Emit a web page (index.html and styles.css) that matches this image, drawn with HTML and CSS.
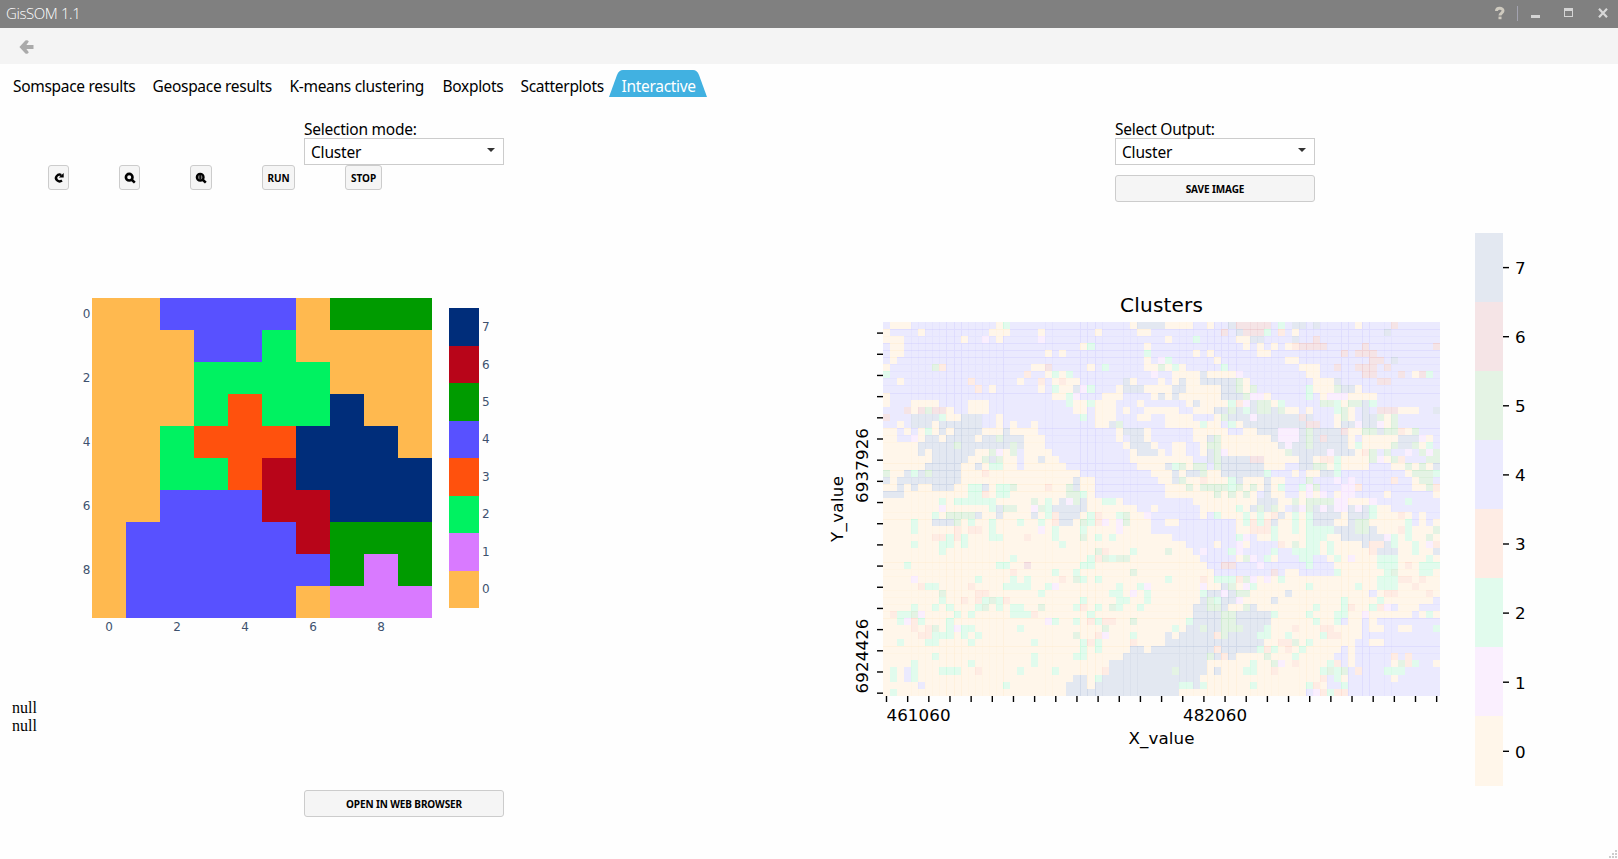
FILE: index.html
```html
<!DOCTYPE html>
<html lang="en">
<head>
<meta charset="utf-8">
<title>GisSOM 1.1</title>
<link rel="stylesheet" href="styles.css">
</head>
<body>
<header class="titlebar">
  <span class="app-name">GisSOM 1.1</span>
  <svg class="window-controls" width="124" height="28" viewBox="1494 0 124 28">
    <path d="M1496.500 11 C1496.500 7.400 1503 7.400 1503 10.800 C1503 13.200 1500 13 1500 15.600" fill="none" stroke="#cfcabf" stroke-width="3"/>
    <rect x="1498.500" y="16.600" width="3" height="2.600" fill="#cfcabf"/>
    <rect x="1517" y="6" width="1" height="15" fill="#a3a3b0"/>
    <rect x="1531" y="15" width="9" height="3" fill="#d4d4d4"/>
    <path d="M1564 8h9v9h-9z M1565 11v5h7v-5z" fill="#d4d4d4" fill-rule="evenodd"/>
    <path d="M1599 8.800l8 8.400M1607 8.800l-8 8.400" stroke="#d8d8d8" stroke-width="2.200"/>
  </svg>
</header>
<div class="toolbar">
  <svg width="16" height="16" viewBox="0 0 16 16"><path d="M.4 7 6.400 .6Q8.500 -.6 9.800 1.600L7.400 5H14.500V9H7.400L9.800 12.200Q8.500 14.600 6.400 13.400z" fill="#aaa"/></svg>
</div>
<nav class="tabs">
  <a class="tab t1">Somspace results</a>
  <a class="tab t2">Geospace results</a>
  <a class="tab t3">K-means clustering</a>
  <a class="tab t4">Boxplots</a>
  <a class="tab t5">Scatterplots</a>
  <a class="tab active">
    <svg class="tab-shape" width="98" height="27" viewBox="0 0 98 27"><path d="M0 27 8 5Q10 0 14 0H84Q88 0 90 5L98 27z" fill="#41b1e1"/></svg>
    <span class="tab-text">Interactive</span>
  </a>
</nav>
<main class="panels">
  <section class="panel som">
    <div class="field">
      <label class="label sel-mode">Selection mode:</label>
      <div class="select"><span>Cluster</span><i class="caret"></i></div>
    </div>
    <div class="tools">
      <button class="btn b-reload"><svg width="12" height="12" viewBox="0 0 12 12"><path d="M9 8.600A3.700 3.300 0 1 1 8.300 3" fill="none" stroke="#000" stroke-width="2.400"/><path d="M5.800 5.400h4.900V1z"/></svg></button>
      <button class="btn b-zoom"><svg width="12" height="12" viewBox="0 0 12 12"><circle cx="5.200" cy="5.200" r="3.300" fill="none" stroke="#000" stroke-width="2.600"/><path d="M7.200 7.200 10.800 10.600" stroke="#000" stroke-width="2.600"/></svg></button>
      <button class="btn b-zoomin"><svg width="12" height="12" viewBox="0 0 12 12"><circle cx="5.200" cy="5.200" r="3.400" fill="#777" stroke="#000" stroke-width="2.200"/><path d="M5.200 3v4.400" stroke="#000" stroke-width="1.300"/><path d="M7.200 7.200 10.800 10.600" stroke="#000" stroke-width="2.600"/></svg></button>
      <button class="btn b-run">RUN</button>
      <button class="btn b-stop">STOP</button>
    </div>
    <svg class="som-chart" id="som" width="520" height="505" viewBox="0 190 520 505"></svg>
    <div class="messages">null<br>null</div>
    <button class="btn wide open">OPEN IN WEB BROWSER</button>
  </section>
  <section class="panel geo">
    <div class="field">
      <label class="label sel-out">Select Output:</label>
      <div class="select"><span>Cluster</span><i class="caret"></i></div>
    </div>
    <button class="btn wide save">SAVE IMAGE</button>
    <svg class="geo-chart" id="geo" width="808" height="657" viewBox="810 202 808 657"></svg>
  </section>
</main>
<script src="charts.js"></script>
</body>
</html>
```

FILE: styles.css
```css
* { box-sizing: border-box; }
body {
  margin: 0;
  width: 1618px;
  height: 859px;
  overflow: hidden;
  display: flex;
  flex-direction: column;
  background: #fefefe;
  color: #000;
  font: 15.500px/20px "Noto Sans", "Open Sans", sans-serif;
}
svg { display: block; }
.titlebar {
  flex: none;
  height: 28px;
  padding-left: 6px;
  display: flex;
  justify-content: space-between;
  background: #808080;
  color: #fff;
}
.app-name {
  font: 300 15px/27px "Open Sans", "Noto Sans", sans-serif;
  letter-spacing: -0.4px;
}
.toolbar {
  flex: none;
  height: 36px;
  padding: 12px 0 0 19px;
  background: #f4f4f4;
}
.tabs {
  flex: none;
  height: 33px;
  padding: 6px 0 0 13px;
  display: flex;
  white-space: nowrap;
  line-height: 32px;
}
.tab { flex: none; letter-spacing: -0.3px; }
.t1 { width: 139.500px; }
.t2 { width: 137px; }
.t3 { width: 153px; }
.t4 { width: 78px; }
.t5 { width: 88.500px; }
.active { width: 98px; display: grid; color: #fff; }
.tab-shape, .tab-text { grid-area: 1 / 1; }
.tab-text { padding-left: 12.500px; }
.panels {
  flex: 1;
  display: grid;
  grid-template-columns: 810px 808px;
}
.panel { display: flex; flex-direction: column; }
.field { margin: 22px 0 0 304px; width: 200px; }
.geo .field { margin-left: 305px; }
.label {
  display: block;
  height: 19px;
  line-height: 20px;
  letter-spacing: -0.250px;
  white-space: nowrap;
}
.select {
  height: 27px;
  border: 1px solid #ccc;
  background: #fff;
  padding: 1px 8px 0 6px;
  display: flex;
  align-items: center;
  justify-content: space-between;
  letter-spacing: -0.2px;
}
.caret {
  border: 4px solid transparent;
  border-top-color: #333;
  border-bottom: 0;
  margin-bottom: 4px;
}
.btn {
  height: 25px;
  padding: 0;
  display: flex;
  align-items: center;
  justify-content: center;
  border: 1px solid #ccc;
  border-radius: 3px;
  background: #f5f5f5;
  color: #000;
  font: 700 10px/14px "Noto Sans", "Open Sans", sans-serif;
}
.tools { display: flex; padding-left: 48px; }
.b-reload { width: 21px; margin-right: 50px; }
.b-zoom { width: 21px; margin-right: 50px; }
.b-zoomin { width: 22px; margin-right: 50px; }
.b-run { width: 33px; margin-right: 50px; }
.b-stop { width: 37px; }
.wide { width: 200px; height: 27px; flex: none; letter-spacing: -0.1px; }
.open { margin: 52px 0 0 304px; }
.save { margin: 10px 0 0 305px; }
.messages {
  height: 43px;
  padding: 4px 0 0 12px;
  font: 16px/18px "Liberation Serif", serif;
}
.plotly-text { font: 12px "DejaVu Sans", sans-serif; fill: #2a3f5f; opacity: 0.9; }
.mpl-text { font: 16.700px "DejaVu Sans", sans-serif; fill: #000; }
.mpl-title { font-size: 20px; }
```

FILE: charts.js
```javascript
const NS = "http://www.w3.org/2000/svg";

function add(parent, name, attrs, text) {
  const el = document.createElementNS(NS, name);
  for (const key in attrs) el.setAttribute(key, attrs[key]);
  if (text !== undefined) el.textContent = text;
  parent.appendChild(el);
  return el;
}

/* SOM space: 10 x 10 cluster grid with its colour bar */
const PALETTE = ["#ffb94f", "#d97aff", "#00f261", "#ff510d", "#5851ff", "#009b00", "#b80519", "#002d7a"];
const SOM = [
  "0044440555",
  "0004420000",
  "0002222000",
  "0002322700",
  "0023337770",
  "0022367777",
  "0044466777",
  "0444446555",
  "0444444515",
  "0444440111"
];
const som = document.getElementById("som");
SOM.forEach((row, r) => [...row].forEach((v, c) =>
  add(som, "rect", { x: 92 + c * 34, y: 298 + r * 32, width: 34, height: 32, fill: PALETTE[v], "shape-rendering": "crispEdges" })));
for (let v = 0; v < 8; v++) {
  add(som, "rect", { x: 449, y: 570.5 - v * 37.5, width: 30, height: 37.5, fill: PALETTE[v], "shape-rendering": "crispEdges" });
  add(som, "text", { x: 482, y: 593 - v * 37.4, class: "plotly-text" }, v);
}
for (let k = 0; k < 10; k += 2) {
  add(som, "text", { x: 109 + k * 34, y: 631, "text-anchor": "middle", class: "plotly-text" }, k);
  add(som, "text", { x: 90.5, y: 318 + k * 32, "text-anchor": "end", class: "plotly-text" }, k);
}

/* Geo space: each row lists "column:cluster" where a new run begins */
const LIGHT = ["#fff6ea", "#faeffe", "#e1fbed", "#feece4", "#ebeafe", "#e4f3e4", "#f5e4e6", "#e3e8f1"];
const GEO = [
  "0:4 1:0 4:4 16:0 17:2 18:4 35:0 36:7 40:0 44:4 46:0 47:4 49:7 50:6 55:4 56:2 57:4 58:7 60:4 61:7 62:4 67:0 68:4 72:6 73:4",
  "0:0 1:4 5:0 6:4 15:0 18:4 22:0 23:4 30:0 31:4 36:0 38:4 48:6 49:4 50:7 51:6 54:2 55:4 56:3 57:4 58:0 59:4 71:7 72:4",
  "0:0 3:4 11:0 12:4 14:1 15:4 16:0 17:4 22:1 23:4 40:0 41:4 44:2 45:4 50:0 52:7 54:4 58:7 59:4 61:6 62:4",
  "0:4 1:0 3:4 28:0 29:2 30:4 37:0 38:4 51:0 52:4 53:0 54:4 55:0 56:4 57:0 58:3 59:6 63:4 68:6 69:4 78:6",
  "0:4 1:0 3:4 23:0 24:4 25:0 26:4 37:2 38:4 44:0 45:4 46:0 47:4 53:0 55:4 65:6 66:4 67:6 70:4",
  "0:4 1:0 2:4 37:0 38:4 39:1 40:2 41:4 47:0 48:4 57:0 59:4 69:6 71:4 72:7 73:4",
  "0:0 1:4 7:5 8:3 9:4 21:0 23:6 24:4 29:0 30:4 31:2 32:4 37:0 39:5 40:0 41:2 42:0 43:4 48:2 49:4 59:0 62:4 64:6 65:4 67:6 70:4 71:6 72:4",
  "0:2 1:4 20:3 21:4 23:0 24:2 25:0 26:2 27:4 38:1 39:4 41:0 45:7 46:0 50:1 51:4 60:0 62:4 68:6 70:4 73:6 74:4 75:0 76:6 77:2 78:4",
  "0:4 2:0 3:4 12:3 13:4 19:0 20:4 22:3 23:4 24:0 25:3 26:0 28:4 34:7 35:0 36:4 39:0 40:4 41:0 42:7 43:0 45:7 50:5 51:0 52:4 61:0 64:7 65:4 70:6 72:4",
  "0:4 13:3 14:4 15:0 16:4 22:0 23:4 24:2 25:0 27:7 28:1 29:2 30:4 33:0 34:7 37:0 41:7 43:0 48:7 50:5 51:0 52:5 53:4 60:2 61:0 64:5 65:7 67:0 68:4",
  "0:0 1:4 24:0 26:2 27:1 28:4 31:0 34:4 38:0 39:7 40:0 41:7 42:0 48:7 51:5 52:1 54:0 55:4 60:2 61:4 62:0 63:1 66:0 70:4",
  "0:0 1:4 4:0 8:4 12:0 15:4 26:2 27:0 29:2 30:0 33:4 36:0 37:4 43:0 44:7 45:0 49:2 50:3 51:1 52:7 53:5 55:0 56:2 57:4 62:5 64:2 65:0 66:5 68:7 69:2 70:4",
  "0:4 3:6 4:0 5:6 6:5 7:6 9:0 10:4 12:0 15:4 27:0 29:4 30:0 33:4 34:0 35:4 37:0 42:4 44:0 47:7 49:5 50:7 51:2 52:7 53:5 55:7 56:5 57:0 59:4 60:0 61:4 64:2 65:5 66:0 67:4 68:7 69:4 70:6 73:0 76:4 78:7",
  "0:6 1:4 4:7 8:2 9:0 11:7 14:4 16:0 17:4 28:2 29:4 30:0 33:4 36:0 38:4 40:0 44:4 47:0 48:5 49:7 52:1 53:7 59:6 60:7 61:4 64:0 65:5 66:0 67:4 68:7 70:5 71:0 72:5 73:4",
  "0:4 2:0 3:4 4:7 7:0 8:7 14:4 16:0 17:4 18:0 19:4 21:0 22:4 30:0 32:7 33:5 34:4 40:0 45:2 46:0 48:4 49:2 50:0 51:7 60:6 62:4 64:0 65:7 67:1 68:7 70:1 71:0 72:5 73:4",
  "0:0 2:4 3:0 4:4 5:0 6:2 7:0 8:7 9:0 10:7 14:0 17:7 18:0 22:4 33:0 34:7 37:0 38:4 44:0 49:4 51:0 53:7 56:1 59:7 60:5 61:7 65:6 66:0 68:5 70:7 71:5 73:3 74:0 75:5 76:4",
  "0:0 2:4 4:1 5:0 6:7 8:0 9:7 13:0 14:7 16:5 17:7 20:0 23:4 33:0 34:4 35:7 37:0 38:4 44:0 46:7 47:5 48:0 55:7 56:1 59:7 60:5 61:7 62:6 63:7 66:0 67:4 68:0 73:7 76:1 77:0 78:4",
  "0:0 5:7 10:5 11:7 18:5 19:7 20:0 23:4 34:0 35:7 38:0 39:4 41:0 43:4 45:0 46:5 48:0 56:7 57:1 58:7 60:5 61:7 66:0 67:2 68:0 72:5 73:7 75:5 76:0 77:2 78:4",
  "0:0 5:7 6:0 7:7 13:0 15:5 16:1 17:0 18:5 19:4 20:0 24:4 35:0 36:7 39:0 40:4 41:0 43:4 45:0 46:7 47:5 48:1 49:0 57:5 58:7 63:1 64:7 67:0 68:3 69:5 70:4 71:5 72:4 74:1 75:4 76:5 77:1 78:5",
  "0:0 7:7 12:0 14:5 15:7 16:5 17:0 19:4 20:0 22:7 23:0 25:4 35:0 44:4 46:7 47:5 48:7 52:6 54:0 59:7 61:0 62:3 64:2 65:0 69:5 70:1 71:0 72:5 73:3 74:4 77:5",
  "0:0 6:7 11:0 13:7 14:0 15:2 16:2 17:0 19:4 20:0 26:4 36:0 40:7 41:2 42:5 43:0 44:5 46:4 47:5 48:7 54:0 57:4 59:7 61:5 63:0 64:2 65:0 69:4 72:0 74:5 75:0 76:5 77:0 78:7",
  "0:5 1:0 3:7 4:2 5:7 6:5 7:7 11:0 14:3 15:0 28:4 38:0 41:7 42:0 43:7 45:5 46:0 48:7 54:2 55:4 58:0 59:4 60:0 62:7 64:2 65:4 74:0 75:5 78:2",
  "0:7 1:0 2:7 11:0 27:7 28:0 30:4 39:0 41:7 42:5 43:0 45:3 46:0 49:2 50:7 51:0 54:7 55:0 57:4 60:5 61:4 64:1 65:4 66:1 67:4 72:3 73:4 75:0 76:5 78:4",
  "0:0 2:7 3:0 4:7 5:0 7:7 10:0 12:2 14:7 15:0 16:2 18:5 19:0 23:3 24:0 26:5 27:7 28:0 30:4 40:0 43:5 44:0 45:5 49:2 50:5 51:0 52:5 53:0 54:7 55:0 56:2 57:4 59:2 60:1 61:5 62:4 65:1 67:3 68:4 75:0 77:5 78:3",
  "0:7 3:0 12:2 14:3 15:0 16:2 18:0 26:5 28:2 29:0 30:4 40:0 47:5 48:0 49:5 50:0 51:5 52:0 53:4 54:7 55:0 57:4 59:0 60:1 61:0 62:1 63:4 64:0 65:1 67:4 71:0 72:4 78:0",
  "0:0 8:2 9:0 10:2 16:0 21:5 22:0 23:2 24:0 25:7 26:1 27:5 28:7 29:0 31:2 33:0 34:4 44:0 53:7 56:0 58:5 59:0 60:5 64:1 66:0 69:1 70:4 74:2 75:4",
  "0:0 8:1 9:0 15:2 16:7 17:5 19:0 21:1 22:5 23:2 24:7 29:0 36:4 38:0 39:4 45:0 50:2 51:0 52:7 53:5 54:7 55:5 56:0 57:4 58:7 59:1 60:5 61:7 62:1 63:7 64:1 66:7 67:1 68:7 69:2 70:0 72:4",
  "0:0 7:2 8:0 9:5 13:7 14:0 16:7 17:0 21:7 22:0 23:2 24:3 25:7 28:0 29:2 30:3 31:0 33:2 34:5 35:0 37:1 38:4 45:0 46:4 47:2 48:0 51:2 52:0 53:2 54:0 55:3 56:7 57:0 58:2 59:0 60:2 61:7 65:0 66:7 69:2 70:0 73:3 74:0 75:4 76:0 77:4",
  "0:0 4:2 5:0 7:7 10:5 11:0 12:2 13:0 15:2 16:0 19:2 20:0 22:2 23:0 24:3 25:7 27:0 28:5 29:2 30:3 31:1 32:0 33:1 34:5 35:0 38:4 40:0 42:4 50:0 51:2 52:3 53:2 54:3 55:7 56:0 58:2 59:0 60:2 61:7 64:0 66:7 67:5 69:0 74:2 75:4 76:0 77:4 78:0",
  "0:0 4:2 5:0 10:3 11:0 12:3 14:0 15:2 16:0 22:1 23:0 24:2 25:0 28:2 29:0 33:1 34:0 38:4 50:0 52:3 55:2 56:0 58:2 59:0 60:2 64:7 67:5 69:7 70:0 73:3 74:2 75:0 78:5",
  "0:0 7:3 9:2 10:3 11:2 12:0 15:2 17:0 20:3 21:0 24:2 25:0 28:5 29:0 30:2 31:0 32:2 33:0 41:4 50:2 51:1 52:4 53:0 55:2 56:0 60:2 63:0 65:7 71:1 72:2 73:0 74:2 75:0 77:5 78:0",
  "0:0 4:2 5:0 8:2 10:0 11:2 12:0 25:2 26:0 43:4 47:0 48:4 50:1 51:0 52:4 56:3 57:0 58:5 59:0 60:2 62:0 63:2 64:0 68:7 69:3 71:7 72:2 73:0 75:2 76:0 77:1 78:3",
  "0:0 8:2 9:0 30:5 31:3 32:0 35:2 36:0 40:5 41:0 44:4 45:1 46:4 49:2 50:1 51:4 55:2 56:4 58:2 62:0 63:2 64:0 69:3 70:7 73:0 75:2 76:0 78:7",
  "0:0 18:2 19:0 29:2 30:3 31:5 32:2 33:5 35:0 45:4 50:0 51:5 52:1 53:4 54:2 55:0 56:4 59:2 61:4 63:0 64:2 65:0 66:1 67:0 70:2 73:0 77:2 78:0",
  "0:0 3:2 4:0 16:2 18:0 20:6 21:0 28:2 30:0 46:4 48:6 50:4 53:1 54:4 60:2 61:4 64:0 70:2 73:0 74:3 75:0 76:2",
  "0:0 18:3 19:0 24:2 25:0 27:2 28:0 35:5 36:0 47:4 55:6 56:4 57:0 59:4 64:2 65:0 71:2 72:5 73:0 76:2 78:0",
  "0:0 4:1 5:0 13:2 14:0 18:2 19:0 20:2 21:0 25:3 26:0 27:5 28:2 29:0 30:2 31:0 40:2 41:0 45:3 46:0 47:2 50:3 51:5 52:1 53:0 54:1 55:0 56:2 57:0 70:2 73:3 75:0 76:3 77:0",
  "0:0 5:3 6:2 8:0 12:3 13:0 17:2 21:0 23:2 24:1 25:0 33:2 34:0 36:2 37:1 38:0 45:1 46:0 48:7 49:5 50:0 51:1 52:2 53:0 60:2 61:0 67:2 68:0 70:2 73:0 75:3 76:0",
  "0:0 8:5 9:0 13:3 15:0 22:2 23:0 32:2 34:0 35:1 36:0 37:2 38:0 45:2 46:7 48:1 49:7 50:5 52:0 57:7 58:0 69:4 70:0 71:3 73:0 77:3 78:0",
  "0:0 8:2 9:0 11:3 12:0 13:3 14:2 15:5 16:2 17:3 18:0 28:2 29:0 33:2 35:0 37:2 38:0 45:7 46:5 47:2 48:7 50:1 51:0 55:7 56:0 65:2 66:0 70:2 71:0 78:4",
  "0:0 4:2 5:0 7:2 8:0 9:2 10:0 13:2 14:5 15:0 16:2 17:0 18:2 20:0 22:5 23:0 27:2 28:3 29:0 30:2 31:0 32:5 33:2 34:0 36:2 37:0 44:7 46:5 48:7 49:0 51:5 52:7 53:0 61:2 62:0 65:2 66:3 67:0 69:2 70:3 71:1 72:4 73:0 76:4",
  "0:0 1:3 2:2 4:5 5:1 6:0 10:2 11:0 12:2 13:0 18:2 21:3 22:0 29:2 30:0 44:7 48:5 50:7 55:2 56:0 60:2 61:0 64:2 66:0 68:1 69:0 75:4 76:0 77:2 78:0",
  "0:0 2:2 3:1 4:3 5:2 6:0 9:2 10:0 23:1 24:2 25:0 27:2 28:0 29:3 30:2 31:3 33:0 35:5 36:0 43:2 44:7 48:5 50:7 55:0 61:2 62:0 64:2 65:4 66:0 68:4 69:0 70:4",
  "0:0 4:3 5:0 6:3 7:5 8:0 9:2 10:1 11:2 13:0 19:2 20:0 31:5 32:0 41:2 42:0 43:7 45:5 46:7 48:5 51:7 54:2 55:0 58:3 59:0 62:3 64:0 68:4 69:0 71:4 73:0 75:4 78:2",
  "0:0 5:3 7:2 10:0 11:2 12:0 13:2 14:0 27:5 28:0 30:3 31:1 32:0 35:2 36:0 40:7 41:0 42:7 47:3 48:5 49:7 53:2 55:0 57:2 58:0 62:2 63:3 65:0 68:4",
  "0:0 2:2 3:0 6:2 8:0 12:2 13:0 21:2 22:0 28:2 29:3 30:2 31:0 35:3 36:0 40:7 54:0 56:3 58:5 59:0 60:2 61:0 67:4 69:0 71:4",
  "0:0 28:2 29:0 30:2 31:0 35:7 37:0 38:7 47:3 48:7 53:2 54:3 55:2 56:0 57:3 58:0 59:2 60:0 65:4 66:0 67:4",
  "0:0 7:2 8:0 21:2 22:0 27:2 29:0 34:7 46:5 47:7 48:3 49:7 50:0 54:5 55:0 58:2 59:0 64:4 66:0 67:4 72:3 73:4 74:3 75:4",
  "0:0 4:2 5:0 12:2 13:0 21:2 22:0 32:7 46:0 52:2 53:0 55:5 56:1 57:0 58:3 59:0 63:2 64:3 65:4 66:0 67:4 72:0 73:5 74:3 75:2 76:4 78:0",
  "0:0 1:2 2:0 3:4 4:2 5:0 8:2 11:0 13:3 14:0 19:2 20:0 24:2 25:0 31:3 32:7 41:5 42:7 46:0 47:7 48:0 51:2 53:0 55:3 56:0 62:2 63:5 64:2 65:5 66:4 67:3 68:4 71:2 74:4",
  "0:0 1:2 2:0 3:4 4:2 5:0 27:7 29:0 30:2 31:7 45:0 62:3 63:4 64:2 65:0 66:4 72:0 73:4",
  "0:0 5:4 6:0 17:2 18:0 26:7 29:0 30:7 42:2 44:7 45:2 46:0 52:2 53:0 60:2 61:3 62:0 63:4 65:2 66:4",
  "0:0 1:2 2:0 26:7 42:0 60:4 61:1 62:3 63:2 64:3 66:4"
];
const geo = document.getElementById("geo");
const COLS = 79, LEFT = 883, TOP = 322, CW = 557 / COLS, CH = 373.7 / GEO.length;

const STRONG_X = [9, 10, 11, 17, 28, 29, 30, 46, 47, 48, 49, 50, 60, 65, 66, 68, 69];
const SOFT_X = [4, 5, 6, 7, 8, 12, 13, 14, 15, 16, 23, 24, 31, 34, 35, 36, 42, 43, 44, 52, 53, 54, 55, 56, 59, 61, 62, 63, 71, 72];
const STRONG_Y = [1, 3, 4, 5, 10, 15, 20, 21, 23, 24, 28, 34, 42, 46];
const SOFT_Y = [2, 6, 7, 8, 9, 16, 17, 22, 27, 35, 36, 38, 39, 40, 41, 47];

const cells = Array(8).fill(""), strong = Array(8).fill(""), soft = Array(8).fill("");
const box = (x, y, w, h) => `M${x} ${y}h${w}v${h}h${-w}z`;
const px = c => Math.round(LEFT + c * CW);
const py = r => Math.round(TOP + r * CH);
GEO.forEach((line, r) => {
  const runs = line.split(" ").map(s => s.split(":").map(Number));
  const y = py(r), h = py(r + 1) - y;
  runs.forEach(([start, v], i) => {
    const end = i + 1 < runs.length ? runs[i + 1][0] : COLS;
    const x = px(start), w = px(end) - x;
    cells[v] += box(x, y, w, h);
    if (STRONG_Y.includes(r)) strong[v] += box(x, y, w, 1);
    if (SOFT_Y.includes(r)) soft[v] += box(x, y, w, 1);
    for (let c = start; c < end; c++) {
      if (STRONG_X.includes(c)) strong[v] += box(px(c), y, 1, h);
      if (SOFT_X.includes(c)) soft[v] += box(px(c), y, 1, h);
    }
  });
});
for (let v = 0; v < 8; v++) add(geo, "path", { d: cells[v], fill: LIGHT[v] });
for (let v = 0; v < 8; v++) {
  add(geo, "path", { d: strong[v], fill: PALETTE[v], opacity: 0.08 });
  add(geo, "path", { d: soft[v], fill: PALETTE[v], opacity: 0.035 });
}

for (let i = 0; i < 27; i++) add(geo, "rect", { x: 885.8 + i * 21.16, y: 696, width: 1.4, height: 6 });
for (let i = 0; i < 18; i++) add(geo, "rect", { x: 877, y: 332.4 + i * 21.18, width: 6, height: 1.4 });

function label(x, y, length, text, rotated, title) {
  const attrs = { x, y, textLength: length, class: title ? "mpl-text mpl-title" : "mpl-text" };
  if (rotated) attrs.transform = `rotate(-90 ${x} ${y})`;
  add(geo, "text", attrs, text);
}
label(1120, 312, 83, "Clusters", false, true);
label(886.5, 720.5, 64, "461060");
label(1183, 720.5, 64, "482060");
label(1128.500, 744, 66, "X_value");
label(868, 503, 75, "6937926", true);
label(868, 693.5, 75, "6924426", true);
label(843, 542, 66, "Y_value", true);

for (let v = 0; v < 8; v++) {
  const top = 785.5 - (v + 1) * 69.1;
  add(geo, "rect", { x: 1475, y: Math.round(top), width: 28, height: Math.round(top + 69.1) - Math.round(top), fill: LIGHT[v] });
  add(geo, "rect", { x: 1503, y: top + 34.2, width: 6, height: 1.4 });
  add(geo, "text", { x: 1515, y: top + 41.2, class: "mpl-text" }, v);
}

/* resize grip */
[[1615, 850], [1612, 853], [1615, 853], [1609, 856], [1612, 856], [1615, 856]].forEach(([x, y]) =>
  add(geo, "rect", { x, y, width: 2, height: 2, fill: "#ccc" }));
```
